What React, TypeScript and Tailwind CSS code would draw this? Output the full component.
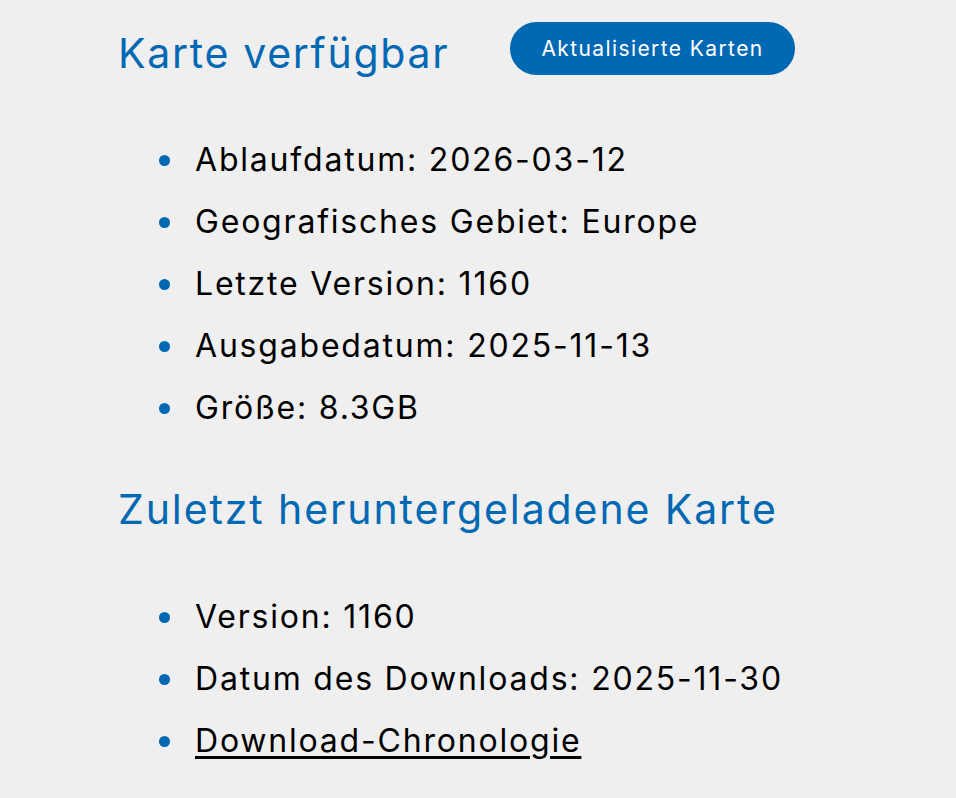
import React from "react";

const available = [
  "Ablaufdatum: 2026-03-12",
  "Geografisches Gebiet: Europe",
  "Letzte Version: 1160",
  "Ausgabedatum: 2025-11-13",
  "Größe: 8.3GB",
];

const Bullet = ({ children }: { children: React.ReactNode }) => (
  <li className="flex items-center h-[62px]">
    <span className="w-[11px] h-[11px] rounded-full bg-[#0168b3] ml-[41px] mr-[25px] shrink-0" />
    <span className="text-[32px] leading-none tracking-[1.8px] text-black">{children}</span>
  </li>
);

export default function App() {
  return (
    <div
      className="min-h-[798px] w-[956px] bg-[#efefef] pl-[118px] pt-[22px]"
      style={{ fontFamily: "Inter, 'Noto Sans', sans-serif" }}
    >
      <div className="flex items-start">
        <h2 className="mt-[11px] text-[41px] leading-none tracking-[1.7px] text-[#0168b3] w-[392px]">
          Karte verfügbar
        </h2>
        <button className="h-[53px] w-[285px] rounded-full bg-[#0168b3] text-white text-[21px] tracking-[1.4px]">
          Aktualisierte Karten
        </button>
      </div>
      <ul className="mt-[54px]">
        {available.map((t) => (
          <Bullet key={t}>{t}</Bullet>
        ))}
      </ul>
      <h2 className="mt-[50px] text-[41px] leading-none tracking-[1.9px] text-[#0168b3]">
        Zuletzt heruntergeladene Karte
      </h2>
      <ul className="mt-[56px]">
        <Bullet>Version: 1160</Bullet>
        <Bullet>Datum des Downloads: 2025-11-30</Bullet>
        <Bullet>
          <a href="#" className="underline underline-offset-[4px] decoration-[3px]">
            Download-Chronologie
          </a>
        </Bullet>
      </ul>
    </div>
  );
}
